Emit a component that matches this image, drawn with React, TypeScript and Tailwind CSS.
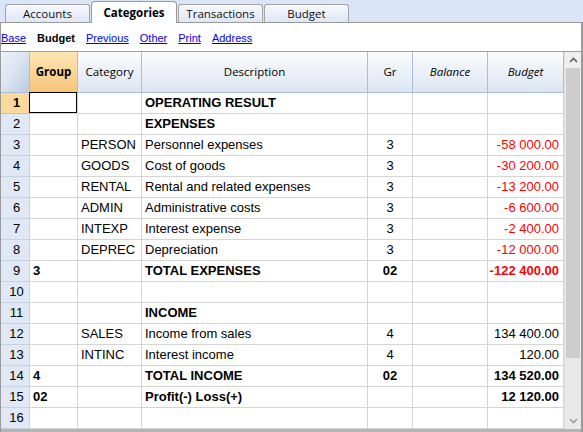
import type { ReactNode } from "react";

type Row = {
    group?: string;
    category?: string;
    description?: string;
    gr?: string;
    budget?: string;
    bold?: boolean;
};

const rows: Row[] = [
    { description: "OPERATING RESULT", bold: true },
    { description: "EXPENSES", bold: true },
    { category: "PERSON", description: "Personnel expenses", gr: "3", budget: "-58 000.00" },
    { category: "GOODS", description: "Cost of goods", gr: "3", budget: "-30 200.00" },
    { category: "RENTAL", description: "Rental and related expenses", gr: "3", budget: "-13 200.00" },
    { category: "ADMIN", description: "Administrative costs", gr: "3", budget: "-6 600.00" },
    { category: "INTEXP", description: "Interest expense", gr: "3", budget: "-2 400.00" },
    { category: "DEPREC", description: "Depreciation", gr: "3", budget: "-12 000.00" },
    { group: "3", description: "TOTAL EXPENSES", gr: "02", budget: "-122 400.00", bold: true },
    {},
    { description: "INCOME", bold: true },
    { category: "SALES", description: "Income from sales", gr: "4", budget: "134 400.00" },
    { category: "INTINC", description: "Interest income", gr: "4", budget: "120.00" },
    { group: "4", description: "TOTAL INCOME", gr: "02", budget: "134 520.00", bold: true },
    { group: "02", description: "Profit(-) Loss(+)", budget: "12 120.00", bold: true },
    {},
];

const tabs = ["Accounts", "Categories", "Transactions", "Budget"];

const links = ["Base", "Budget", "Previous", "Other", "Print", "Address"];

const cols = "grid grid-cols-[29px_48px_64px_226px_45px_75px_76px]";

function HeadCell({ children, italic, active }: { children?: ReactNode; italic?: boolean; active?: boolean }) {
    return (
        <div
            className={
                active
                    ? "flex items-center justify-center border-r border-b border-[#eeb35f] bg-gradient-to-b from-[#fce6b3] to-[#f7c47c] font-bold"
                    : `flex items-center justify-center border-r border-b border-[#a9bed6] bg-gradient-to-b from-[#fbfcfe] to-[#dce5f0] ${italic ? "italic" : ""}`
            }
        >
            {children}
        </div>
    );
}

export default function App() {
    return (
        <div className="w-[583px] h-[432px] overflow-hidden bg-white font-['Liberation_Sans',Arial,sans-serif] text-black">

            {/* tab strip */}
            <div className="h-[23px] bg-[#dae5f7] border-b border-[#9a9a9a] flex items-end pl-[4px] font-['Open_Sans',sans-serif] text-[11.5px]">
                {tabs.map((t) => (
                    t === "Categories" ? (
                        <div
                            key={t}
                            className="relative -mb-px ml-[1px] h-[22px] w-[86px] rounded-t-[4px] border border-b-0 border-[#9a9a9a] bg-gradient-to-b from-white to-[#fbfcfe] flex items-center justify-center font-bold"
                        >
                            {t}
                        </div>
                    ) : (
                        <div
                            key={t}
                            className="h-[18px] w-[85px] ml-[1px] rounded-t-[3px] border border-b-0 border-[#a4a4a4] bg-gradient-to-b from-[#f6f8fd] to-[#dfe7f6] flex items-center justify-center text-[#111]"
                        >
                            {t}
                        </div>
                    )
                ))}
            </div>

            <div className="h-[409px] border-l border-r-2 border-[#9a9a9a] flex flex-col">

                {/* links row */}
                <div className="h-[28px] flex items-center gap-[11px] text-[11px] pt-[3px]">
                    {links.map((l) =>
                        l === "Budget" ? (
                            <span key={l} className="font-bold">{l}</span>
                        ) : (
                            <span key={l} className="text-[#0000ee] underline">{l}</span>
                        )
                    )}
                </div>

                {/* grid */}
                <div className="flex border-t border-[#a0a0a0] flex-1 min-h-0 border-b-[3px] border-b-[#b5b5b5]">
                    <div className="w-[563px]">

                        <div className={`${cols} h-[41px] text-[11.5px] font-['Open_Sans',sans-serif]`}>
                            <div className="border-r border-b border-[#a9bed6] bg-gradient-to-br from-[#eef3fa] via-[#d9e3f1] to-[#b9cbe1]" />
                            <HeadCell active>Group</HeadCell>
                            <HeadCell>Category</HeadCell>
                            <HeadCell>Description</HeadCell>
                            <HeadCell>Gr</HeadCell>
                            <HeadCell italic>Balance</HeadCell>
                            <HeadCell italic>Budget</HeadCell>
                        </div>

                        {rows.map((r, i) => (
                            <div key={i} className={`${cols} h-[21px] text-[13px] ${r.bold ? "font-bold" : ""}`}>
                                <div
                                    className={
                                        i === 0
                                            ? "flex items-center justify-center pl-[3px] bg-[#fdd99b] border-r border-b border-[#efb768] font-bold"
                                            : "flex items-center justify-center pl-[3px] bg-[#dfe8f4] border-r border-b border-[#c6d2e2] font-normal"
                                    }
                                >
                                    {i + 1}
                                </div>
                                <div className="relative flex items-center pl-[3px] border-r border-b border-[#d5d5d5]">
                                    {i === 0 && (
                                        <span className="absolute -left-px -top-px right-0 bottom-0 border border-black" />
                                    )}
                                    {r.group}
                                </div>
                                <div className="flex items-center pl-[3px] border-r border-b border-[#d5d5d5]">
                                    {r.category}
                                </div>
                                <div className="flex items-center pl-[3px] border-r border-b border-[#d5d5d5] whitespace-nowrap">
                                    {r.description}
                                </div>
                                <div className="flex items-center justify-center border-r border-b border-[#d5d5d5]">
                                    {r.gr}
                                </div>
                                <div className="border-r border-b border-[#d5d5d5]" />
                                <div
                                    className={`flex items-center justify-end pr-[4px] border-r border-b border-[#d5d5d5] ${
                                        r.budget?.startsWith("-") ? "text-[#ff0000]" : ""
                                    }`}
                                >
                                    {r.budget}
                                </div>
                            </div>
                        ))}
                    </div>

                    {/* scrollbar */}
                    <div className="w-[17px] bg-[#e9e9e9] flex flex-col border-l border-[#e0e0e0]">
                        <div className="h-[16px] flex items-center justify-center bg-[#f0f0f0]">
                            <svg width="9" height="6" viewBox="0 0 9 6">
                                <path d="M1 5 L4.5 1.5 L8 5" fill="none" stroke="#606060" strokeWidth="1.6" />
                            </svg>
                        </div>
                        <div className="mx-[1px] h-[290px] bg-[#cdcdcd]" />
                        <div className="flex-1" />
                        <div className="h-[16px] flex items-center justify-center">
                            <svg width="9" height="6" viewBox="0 0 9 6">
                                <path d="M1 1 L4.5 4.5 L8 1" fill="none" stroke="#a0a0a0" strokeWidth="1.6" />
                            </svg>
                        </div>
                    </div>
                </div>
            </div>
        </div>
    );
}
